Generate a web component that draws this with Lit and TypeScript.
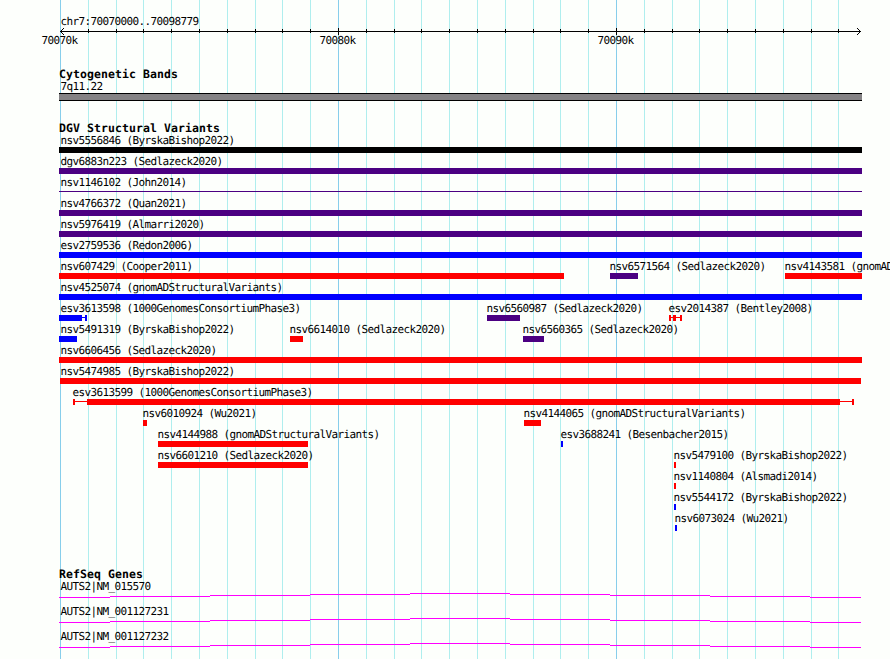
import { LitElement, html, svg, css } from "lit";
import { customElement, property } from "lit/decorators.js";
import { classMap } from "lit/directives/class-map.js";
import { styleMap } from "lit/directives/style-map.js";

type Kind = "complex" | "mixed" | "gain" | "loss";

interface Feature {
  label: string;
  kind: Kind;
  start: number;
  end: number;
  // extent of the solid box when the breakpoints are fuzzy
  boxStart?: number;
  boxEnd?: number;
  thin?: boolean;
}

const LEFT = 60;
const WIDTH = 890;

const lanes: Feature[][] = [
  [{ label: "nsv5556846 (ByrskaBishop2022)", kind: "complex", start: 59, end: 862 }],
  [{ label: "dgv6883n223 (Sedlazeck2020)", kind: "mixed", start: 59, end: 862 }],
  [{ label: "nsv1146102 (John2014)", kind: "mixed", start: 59, end: 862, thin: true }],
  [{ label: "nsv4766372 (Quan2021)", kind: "mixed", start: 59, end: 862 }],
  [{ label: "nsv5976419 (Almarri2020)", kind: "mixed", start: 59, end: 862 }],
  [{ label: "esv2759536 (Redon2006)", kind: "gain", start: 59, end: 862 }],
  [
    { label: "nsv607429 (Cooper2011)", kind: "loss", start: 59, end: 564 },
    { label: "nsv6571564 (Sedlazeck2020)", kind: "mixed", start: 610, end: 638 },
    { label: "nsv4143581 (gnomADStructuralVariants)", kind: "loss", start: 785, end: 862 },
  ],
  [{ label: "nsv4525074 (gnomADStructuralVariants)", kind: "gain", start: 59, end: 862 }],
  [
    { label: "esv3613598 (1000GenomesConsortiumPhase3)", kind: "gain", start: 59, end: 87, boxStart: 59, boxEnd: 82 },
    { label: "nsv6560987 (Sedlazeck2020)", kind: "mixed", start: 487, end: 520 },
    { label: "esv2014387 (Bentley2008)", kind: "loss", start: 669, end: 682, boxStart: 673, boxEnd: 676 },
  ],
  [
    { label: "nsv5491319 (ByrskaBishop2022)", kind: "gain", start: 59, end: 77 },
    { label: "nsv6614010 (Sedlazeck2020)", kind: "loss", start: 290, end: 303 },
    { label: "nsv6560365 (Sedlazeck2020)", kind: "mixed", start: 523, end: 544 },
  ],
  [{ label: "nsv6606456 (Sedlazeck2020)", kind: "loss", start: 59, end: 862 }],
  [{ label: "nsv5474985 (ByrskaBishop2022)", kind: "loss", start: 60, end: 861 }],
  [{ label: "esv3613599 (1000GenomesConsortiumPhase3)", kind: "loss", start: 73, end: 854, boxStart: 87, boxEnd: 840 }],
  [
    { label: "nsv6010924 (Wu2021)", kind: "loss", start: 143, end: 147 },
    { label: "nsv4144065 (gnomADStructuralVariants)", kind: "loss", start: 524, end: 541 },
  ],
  [
    { label: "nsv4144988 (gnomADStructuralVariants)", kind: "loss", start: 158, end: 308 },
    { label: "esv3688241 (Besenbacher2015)", kind: "gain", start: 561, end: 563 },
  ],
  [
    { label: "nsv6601210 (Sedlazeck2020)", kind: "loss", start: 158, end: 308 },
    { label: "nsv5479100 (ByrskaBishop2022)", kind: "loss", start: 674, end: 676 },
  ],
  [{ label: "nsv1140804 (Alsmadi2014)", kind: "loss", start: 674, end: 676 }],
  [{ label: "nsv5544172 (ByrskaBishop2022)", kind: "gain", start: 674, end: 676 }],
  [{ label: "nsv6073024 (Wu2021)", kind: "gain", start: 675, end: 677 }],
];

const genes = ["AUTS2|NM_015570", "AUTS2|NM_001127231", "AUTS2|NM_001127232"];

const ticks = Array.from({ length: 29 }, (_, i) => ({
  x: LEFT + Math.round(i * 27.8),
  major: i % 10 === 0,
}));

const textStyles = css`
  .label {
    font: 11px/12px "DejaVu Sans Mono", monospace;
    letter-spacing: -0.622px;
    text-indent: 0.5px;
    text-rendering: geometricPrecision;
    white-space: pre;
    color: #000;
  }
`;

@customElement("scale-ruler")
export class ScaleRuler extends LitElement {
  static styles = [
    textStyles,
    css`
      :host {
        display: block;
        height: 68px;
        padding-top: 16px;
        box-sizing: border-box;
      }

      .region {
        padding-left: 60px;
      }

      svg {
        display: block;
        shape-rendering: crispEdges;
      }

      path {
        fill: none;
        stroke: #000;
      }

      .numbers {
        display: flex;
        gap: 242px;
        padding-left: 41px;
      }

      .numbers .label {
        width: 36px;
      }
    `,
  ];

  render() {
    return html`
      <div class="label region">chr7:70070000..70098779</div>
      <svg width=${WIDTH} height="7" viewBox="0 28 890 7">
        <path d="M60 31.5H861" />
        ${ticks.slice(1).map(({ x, major }) =>
          major
            ? svg`<path d="M${x + 0.5} 28V35" />`
            : svg`<path d="M${x + 0.5} 29V33" />`
        )}
        <path d="M61 30.5h1M62 29.5h1M63 28.5h1M61 32.5h1M62 33.5h1M63 34.5h1" />
        <path d="M859 30.5h1M858 29.5h1M857 28.5h1M859 32.5h1M858 33.5h1M857 34.5h1" />
      </svg>
      <div class="numbers">
        <span class="label">70070k</span>
        <span class="label">70080k</span>
        <span class="label">70090k</span>
      </div>
    `;
  }
}

@customElement("feature-lane")
export class FeatureLane extends LitElement {
  @property({ attribute: false }) features: Feature[] = [];

  static styles = [
    textStyles,
    css`
      :host {
        display: grid;
        height: 21px;
      }

      .feature {
        grid-area: 1 / 1;
        justify-self: start;
        width: 0;
      }

      .glyph {
        display: grid;
        height: 6px;
        align-items: center;
      }

      .glyph > * {
        grid-area: 1 / 1;
      }

      .box {
        height: 6px;
        background: currentColor;
      }

      .line {
        height: 1px;
        margin-bottom: 1px;
        background: currentColor;
      }

      .caps {
        height: 6px;
        box-sizing: border-box;
        border: solid currentColor;
        border-width: 0 2px;
      }

      .caps.open {
        border-left: 0;
      }

      .complex {
        color: #000;
      }

      .mixed {
        color: #4b0082;
      }

      .gain {
        color: #00f;
      }

      .loss {
        color: #f00;
      }
    `,
  ];

  renderGlyph(f: Feature) {
    if (f.thin) return html`<div class="line"></div>`;
    if (f.boxStart === undefined || f.boxEnd === undefined) {
      return html`<div class="box"></div>`;
    }
    const box = {
      marginLeft: `${f.boxStart - f.start}px`,
      width: `${f.boxEnd - f.boxStart}px`,
    };
    return html`
      <div class="line"></div>
      <div class=${classMap({ caps: true, open: f.boxStart === f.start })}></div>
      <div class="box" style=${styleMap(box)}></div>
    `;
  }

  render() {
    return this.features.map((f) => {
      const textX = Math.max(LEFT, f.start - 1);
      return html`
        <div class="feature" style=${styleMap({ marginLeft: `${f.start}px` })}>
          <div class="label" style=${styleMap({ marginLeft: `${textX - f.start}px` })}>${f.label}</div>
          <div class="glyph ${f.kind}" style=${styleMap({ width: `${f.end - f.start}px` })}>
            ${this.renderGlyph(f)}
          </div>
        </div>
      `;
    });
  }
}

@customElement("app-root")
export class AppRoot extends LitElement {
  static styles = [
    textStyles,
    css`
      :host {
        display: grid;
        width: 890px;
        height: 659px;
        overflow: hidden;
        background: #fdfffc;
      }

      .grid,
      .tracks {
        grid-area: 1 / 1;
        min-width: 0;
      }

      .grid {
        display: block;
        shape-rendering: crispEdges;
      }

      .minor {
        fill: #afeeee;
      }

      .major {
        fill: #87ceeb;
      }

      h2 {
        margin: 0;
        padding-left: 59px;
        font: bold 11.5px/13px "DejaVu Sans Mono", monospace;
        letter-spacing: 0.077px;
        text-rendering: geometricPrecision;
        color: #000;
      }

      .name {
        padding-left: 60px;
      }

      .cyto {
        height: 54px;
      }

      .band {
        box-sizing: border-box;
        width: 803px;
        height: 8px;
        margin-left: 59px;
        border: solid #000;
        border-width: 1px 0;
        background: #848284;
      }

      .variants {
        height: 446px;
      }

      .gene {
        height: 25px;
      }

      .gene svg {
        display: block;
        shape-rendering: crispEdges;
      }

      .intron {
        fill: none;
        stroke: #f0f;
      }
    `,
  ];

  render() {
    return html`
      <svg class="grid" width="890" height="659">
        ${ticks.map(
          ({ x, major }) =>
            svg`<rect class=${major ? "major" : "minor"} x=${x} y="0" width="1" height="659" />`
        )}
      </svg>
      <div class="tracks">
        <scale-ruler></scale-ruler>
        <section class="cyto">
          <h2>Cytogenetic Bands</h2>
          <div class="label name">7q11.22</div>
          <div class="band"></div>
        </section>
        <section class="variants">
          <h2>DGV Structural Variants</h2>
          ${lanes.map((lane) => html`<feature-lane .features=${lane}></feature-lane>`)}
        </section>
        <section>
          <h2>RefSeq Genes</h2>
          ${genes.map(
            (name) => html`
              <div class="gene">
                <div class="label name">${name}</div>
                <svg width="890" height="6">
                  <path
                    class="intron"
                    d="M59 4.5H110M110 3.5H210M210 2.5H310M310 1.5H410M410 0.5H510M510 1.5H610M610 2.5H710M710 3.5H810M810 4.5H861"
                  />
                </svg>
              </div>
            `
          )}
        </section>
      </div>
    `;
  }
}

declare global {
  interface HTMLElementTagNameMap {
    "app-root": AppRoot;
    "scale-ruler": ScaleRuler;
    "feature-lane": FeatureLane;
  }
}
